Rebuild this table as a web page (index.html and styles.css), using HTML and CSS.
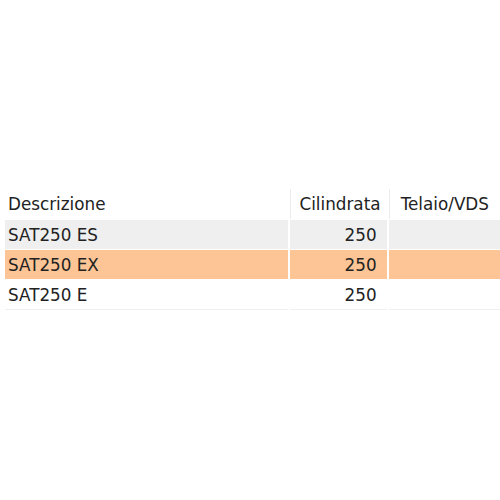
FILE: index.html
```html
<!DOCTYPE html>
<html>
<head>
<meta charset="utf-8">
<link rel="stylesheet" href="styles.css">
</head>
<body>
<div class="wrap">
<table class="grid">
  <thead>
    <tr>
      <th class="c-desc">Descrizione</th>
      <th class="c-cil">Cilindrata</th>
      <th class="c-tel">Telaio/VDS</th>
    </tr>
  </thead>
  <tbody>
    <tr class="alt">
      <td class="c-desc">SAT250 ES</td>
      <td class="c-cil num">250</td>
      <td class="c-tel"></td>
    </tr>
    <tr class="sel">
      <td class="c-desc">SAT250 EX</td>
      <td class="c-cil num">250</td>
      <td class="c-tel"></td>
    </tr>
    <tr class="last">
      <td class="c-desc">SAT250 E</td>
      <td class="c-cil num">250</td>
      <td class="c-tel"></td>
    </tr>
  </tbody>
</table>
</div>
</body>
</html>
```

FILE: styles.css
```css
html, body {
  margin: 0;
  padding: 0;
  background: #ffffff;
  overflow: hidden;
}
.wrap {
  width: 500px;
  height: 500px;
  overflow: hidden;
  padding-top: 188px;
  padding-left: 3px;
  box-sizing: border-box;
}
.grid {
  border-collapse: separate;
  border-spacing: 2px 1px;
  font-family: "DejaVu Sans", Tahoma, sans-serif;
  font-size: 16.8px;
  color: #222222;
  table-layout: fixed;
  width: 600px;
}
.c-desc { width: 280px; }
.c-cil { width: 87px; }
.c-tel { width: 200px; }
.grid th {
  font-weight: normal;
  text-align: left;
  height: 30px;
  padding: 0 0 0 3px;
  vertical-align: middle;
}
.grid th.c-cil,
.grid th.c-tel {
  border-left: 1px solid #ececec;
}
.grid th.c-cil { padding-left: 8px; }
.grid th.c-tel { padding-left: 11px; }
.grid td {
  height: 29px;
  padding: 0 0 0 3px;
  vertical-align: middle;
}
.grid td.num {
  text-align: right;
  padding-right: 10px;
}
.alt td { background: #efefef; }
.sel td { background: #fdc595; }
.last td { border-bottom: 1px solid #efefef; }
```
